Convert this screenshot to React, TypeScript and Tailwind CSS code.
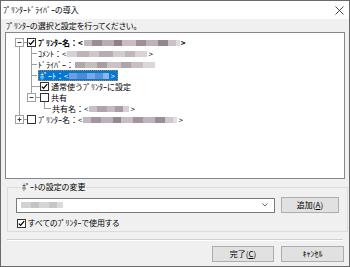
import React from "react";

const FONT = "font-['Noto_Sans_CJK_JP','Noto_Sans_CJK_SC',sans-serif] [font-feature-settings:'palt']";

function Blur({ segs, h = "h-[6px]" }: { segs: string[]; h?: string }) {
  return (
    <span className={`inline-flex ${h} blur-[0.6px] mx-[1px]`}>
      {segs.map((s, i) => (
        <span key={i} className={`h-full ${s}`} />
      ))}
    </span>
  );
}

function Check({ checked }: { checked: boolean }) {
  return (
    <span className="flex h-[9px] w-[9px] shrink-0 items-center justify-center border border-[#333333] bg-white">
      {checked && (
        <svg width="7" height="7" viewBox="0 0 7 7">
          <polyline points="0.8,3.6 2.6,5.4 6.2,1.2" fill="none" stroke="#000" strokeWidth="1.3" />
        </svg>
      )}
    </span>
  );
}

function Expander({ plus }: { plus?: boolean }) {
  return (
    <span className="flex h-[9px] w-[9px] shrink-0 items-center justify-center border border-[#a0a0a0] bg-white">
      <svg width="7" height="7" viewBox="0 0 7 7">
        <line x1="1.5" y1="3.5" x2="5.5" y2="3.5" stroke="#404040" strokeWidth="1" />
        {plus && <line x1="3.5" y1="1.5" x2="3.5" y2="5.5" stroke="#404040" strokeWidth="1" />}
      </svg>
    </span>
  );
}

function Button({ children }: { children: React.ReactNode }) {
  return (
    <div className="flex h-[16px] items-center justify-center border border-[#adadad] bg-[#e1e1e1] text-[8px] leading-none text-black">
      {children}
    </div>
  );
}

export default function App() {
  return (
    <div className={`${FONT} flex h-[267px] w-[350px] flex-col border border-[#6a6a6a] bg-[#f0f0f0] text-black`}>
      {/* Title bar */}
      <div className="flex h-[18px] shrink-0 items-center justify-between bg-white pl-[2px] pr-[5px]">
        <span className="text-[8px] leading-none">ﾌﾟﾘﾝﾀｰﾄﾞﾗｲﾊﾞｰの導入</span>
        <svg width="9" height="9" viewBox="0 0 9 9">
          <line x1="0.5" y1="0.5" x2="8.5" y2="8.5" stroke="#333" strokeWidth="0.9" />
          <line x1="8.5" y1="0.5" x2="0.5" y2="8.5" stroke="#333" strokeWidth="0.9" />
        </svg>
      </div>

      <div className="flex flex-1 flex-col px-[4px]">
        <div className="flex h-[13px] items-center pl-[1px] text-[8px] leading-none">
          ﾌﾟﾘﾝﾀｰの選択と設定を行ってください。
        </div>

        {/* Tree view */}
        <div className="relative h-[147px] shrink-0 border border-[#828790] bg-white pt-[4px] text-[8px] leading-none [font-feature-settings:normal]">
          <svg className="pointer-events-none absolute left-0 top-0" width="338" height="145">
            <g stroke="#a0a0a0" strokeWidth="1" shapeRendering="crispEdges">
              {/* level 0 vertical */}
              <line x1="13.5" y1="13" x2="13.5" y2="82" />
              <line x1="18" y1="9.5" x2="21" y2="9.5" />
              <line x1="18" y1="86.5" x2="21" y2="86.5" />
              {/* level 1 vertical */}
              <line x1="25.5" y1="14" x2="25.5" y2="60" />
              <line x1="25.5" y1="20.5" x2="31" y2="20.5" />
              <line x1="25.5" y1="31.5" x2="31" y2="31.5" />
              <line x1="25.5" y1="42.5" x2="31" y2="42.5" />
              <line x1="25.5" y1="53.5" x2="34" y2="53.5" />
              <line x1="30" y1="64.5" x2="34" y2="64.5" />
              {/* level 2 */}
              <line x1="38.5" y1="69" x2="38.5" y2="75.5" />
              <line x1="38.5" y1="75.5" x2="45" y2="75.5" />
            </g>
          </svg>

          {/* Row 1 */}
          <div className="flex h-[11px] items-center pl-[9px]">
            <Expander />
            <span className="ml-[3px]"><Check checked /></span>
            <span className="ml-[2px] flex items-center font-bold">
              ﾌﾟﾘﾝﾀｰ名：&lt;
              <Blur segs={["w-[8px] bg-[#c4b8c0]", "w-[10px] bg-[#9a8c95]", "w-[12px] bg-[#b8acb4]", "w-[8px] bg-[#8e7f89]", "w-[14px] bg-[#c7bdc3]", "w-[10px] bg-[#a08f99]", "w-[12px] bg-[#bdb2b9]", "w-[10px] bg-[#948690]", "w-[8px] bg-[#c9c1c6]", "w-[4px] bg-[#e0dade]"]} />
              &gt;
            </span>
          </div>
          {/* Row 2 */}
          <div className="flex h-[11px] items-center pl-[32px]">
            <span className="flex items-center">
              ｺﾒﾝﾄ：&lt;
              <Blur segs={["w-[10px] bg-[#d6d0d4]", "w-[12px] bg-[#bdb3b9]", "w-[10px] bg-[#cfc7cc]", "w-[14px] bg-[#b7adb3]", "w-[12px] bg-[#d2cbcf]", "w-[10px] bg-[#c0b6bc]", "w-[12px] bg-[#d9d3d7]"]} />
              &gt;
            </span>
          </div>
          {/* Row 3 */}
          <div className="flex h-[11px] items-center pl-[32px]">
            <span className="flex items-center">
              ﾄﾞﾗｲﾊﾞｰ：
              <Blur segs={["w-[10px] bg-[#b3a7af]", "w-[12px] bg-[#c6bcc2]", "w-[10px] bg-[#a99ca5]", "w-[14px] bg-[#cbc2c8]", "w-[10px] bg-[#b0a4ac]", "w-[12px] bg-[#c8bfc5]", "w-[12px] bg-[#dcd6da]"]} />
            </span>
          </div>
          {/* Row 4 selected */}
          <div className="flex h-[11px] items-center pl-[32px]">
            <span className="flex h-[11px] items-center border border-dotted border-[#c08040] bg-[#0078d7] pl-[1px] pr-[2px] text-white">
              ﾎﾟｰﾄ：&lt;
              <Blur segs={["w-[8px] bg-[#6c9fdc]", "w-[10px] bg-[#4f8ad4]", "w-[8px] bg-[#7aa8e0]", "w-[8px] bg-[#5b92d6]", "w-[6px] bg-[#8db5e6]"]} />
              &gt;
            </span>
          </div>
          {/* Row 5 */}
          <div className="flex h-[11px] items-center pl-[34px]">
            <Check checked />
            <span className="ml-[2px]">通常使うﾌﾟﾘﾝﾀｰに設定</span>
          </div>
          {/* Row 6 */}
          <div className="flex h-[11px] items-center pl-[21px]">
            <Expander />
            <span className="ml-[4px]"><Check checked={false} /></span>
            <span className="ml-[2px]">共有</span>
          </div>
          {/* Row 7 */}
          <div className="flex h-[11px] items-center pl-[46px]">
            <span className="flex items-center">
              共有名：&lt;
              <Blur segs={["w-[8px] bg-[#c9c0c6]", "w-[10px] bg-[#b0a4ac]", "w-[8px] bg-[#c4bac0]", "w-[8px] bg-[#a99ca5]", "w-[6px] bg-[#d6d0d4]"]} />
              &gt;
            </span>
          </div>
          {/* Row 8 */}
          <div className="flex h-[11px] items-center pl-[9px]">
            <Expander plus />
            <span className="ml-[3px]"><Check checked={false} /></span>
            <span className="ml-[2px] flex items-center">
              ﾌﾟﾘﾝﾀｰ名：&lt;
              <Blur segs={["w-[8px] bg-[#c4b8c0]", "w-[10px] bg-[#a3959e]", "w-[12px] bg-[#bdb1b9]", "w-[8px] bg-[#958790]", "w-[12px] bg-[#c7bdc3]", "w-[10px] bg-[#a5959f]", "w-[12px] bg-[#c0b5bc]", "w-[10px] bg-[#9b8d97]", "w-[8px] bg-[#cfc8cc]", "w-[4px] bg-[#e3dee1]"]} />
              &gt;
            </span>
          </div>
        </div>

        {/* Group box */}
        <fieldset className="mx-[2px] mt-[3px] h-[50px] shrink-0 border border-[#dcdcdc] px-[8px]">
          <legend className="ml-[5px] px-[1px] text-[8px] leading-[10px]">ﾎﾟｰﾄの設定の変更</legend>
          <div className="mt-[5px] flex items-center gap-[6px]">
            <div className="flex h-[15px] w-[259px] items-center justify-between border border-[#7a7a7a] bg-white pl-[3px] pr-[6px]">
              <Blur h="h-[6px]" segs={["w-[10px] bg-[#d2d2d2]", "w-[8px] bg-[#c4c4c4]", "w-[10px] bg-[#d6d6d6]", "w-[8px] bg-[#c6c6c6]", "w-[6px] bg-[#dadada]"]} />
              <svg width="6" height="4" viewBox="0 0 6 4">
                <polyline points="0.5,0.5 3,3 5.5,0.5" fill="none" stroke="#606060" strokeWidth="0.9" />
              </svg>
            </div>
            <div className="w-[58px]">
              <Button>
                追加(<span className="underline">A</span>)
              </Button>
            </div>
          </div>
          <div className="mt-[5px] flex h-[10px] items-center gap-[2px] pl-[1px] text-[8px] leading-none">
            <Check checked />
            <span>すべてのﾌﾟﾘﾝﾀｰで使用する</span>
          </div>
        </fieldset>

        {/* Separator */}
        <div className="mx-[2px] mt-[7px] h-[2px] shrink-0 border-t border-b border-t-[#d0d0d0] border-b-white" />

        {/* Buttons */}
        <div className="mt-[5px] flex justify-end gap-[7px] pr-[1px]">
          <div className="w-[62px]">
            <Button>
              完了(<span className="underline">C</span>)
            </Button>
          </div>
          <div className="w-[63px]">
            <Button>ｷｬﾝｾﾙ</Button>
          </div>
        </div>
      </div>
    </div>
  );
}
